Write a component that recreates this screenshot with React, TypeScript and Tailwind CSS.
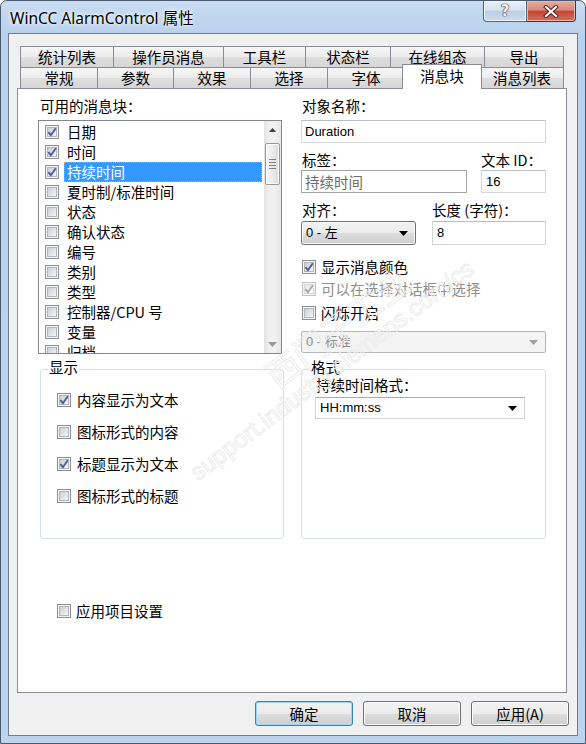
import React from "react";

function CheckBox({ checked = false, disabled = false }: { checked?: boolean; disabled?: boolean }) {
  const id = disabled ? "cbgd" : "cbgn";
  return (
    <svg width="14" height="14" viewBox="0 0 14 14" className="block shrink-0">
      <defs>
        <linearGradient id={id} x1="0" y1="0" x2="1" y2="1">
          <stop offset="0" stopColor={disabled ? "#e4e4e4" : "#c7cbd1"} />
          <stop offset="1" stopColor={disabled ? "#fbfbfb" : "#f8f8f8"} />
        </linearGradient>
      </defs>
      <rect x="0.5" y="0.5" width="13" height="13" fill="#f5f5f5" stroke={disabled ? "#c2c2c2" : "#8e8f8f"} />
      <rect x="2.5" y="2.5" width="9" height="9" fill={`url(#${id})`} stroke={disabled ? "#dadada" : "#b3b7bd"} />
      {checked && (
        <path d="M3.4 7.1 L5.9 10.2 L10.8 3.2" fill="none" stroke={disabled ? "#a9a9a9" : "#4a5e9b"} strokeWidth="1.9" />
      )}
    </svg>
  );
}

function DownArrow({ color = "#000" }: { color?: string }) {
  return (
    <svg width="9" height="5" viewBox="0 0 9 5" className="block">
      <path d="M0 0H9L4.5 5Z" fill={color} />
    </svg>
  );
}

function UpArrow({ color = "#000" }: { color?: string }) {
  return (
    <svg width="7" height="4" viewBox="0 0 7 4" className="block">
      <path d="M0 4H7L3.5 0Z" fill={color} />
    </svg>
  );
}

const row1 = [
  { t: "统计列表", w: "w-[93px]" },
  { t: "操作员消息", w: "w-[110px]" },
  { t: "工具栏", w: "w-[82px]" },
  { t: "状态栏", w: "w-[85px]" },
  { t: "在线组态", w: "w-[94px]" },
  { t: "导出", w: "w-[80px]" },
];

const row2 = [
  { t: "常规", w: "w-[77px]" },
  { t: "参数", w: "w-[76px]" },
  { t: "效果", w: "w-[77px]" },
  { t: "选择", w: "w-[77px]" },
  { t: "字体", w: "w-[77px]" },
  { t: "消息块", w: "w-[76px]", sel: true },
  { t: "消息列表", w: "w-[84px]" },
];

const items: { t: string; c: boolean; sel?: boolean }[] = [
  { t: "日期", c: true },
  { t: "时间", c: true },
  { t: "持续时间", c: true, sel: true },
  { t: "夏时制/标准时间", c: false },
  { t: "状态", c: false },
  { t: "确认状态", c: false },
  { t: "编号", c: false },
  { t: "类别", c: false },
  { t: "类型", c: false },
  { t: "控制器/CPU 号", c: false },
  { t: "变量", c: false },
  { t: "归档", c: false },
];

const tabBg = "bg-[linear-gradient(180deg,#f6f6f6_0%,#ececec_50%,#dedede_51%,#d6d6d6_100%)]";
const btnBg = "bg-[linear-gradient(180deg,#f2f2f2_0%,#ebebeb_50%,#dddddd_51%,#cfcfcf_100%)]";

function Tab({ t, w, sel, last }: { t: string; w: string; sel?: boolean; last?: boolean }) {
  if (sel) {
    return (
      <div className={`${w} h-[21px] relative`}>
        <div className="absolute -left-[2px] -right-[2px] -top-[3px] h-[25px] z-10 bg-white border-t border-l border-r border-[#898c95] flex items-center justify-center pb-[3px] leading-[18px]">
          {t}
        </div>
      </div>
    );
  }
  return (
    <div
      className={`${w} h-[21px] border-t border-l ${last ? "border-r" : ""} border-[#898c95] ${tabBg} flex items-center justify-center leading-[20px]`}
    >
      {t}
    </div>
  );
}

function Scrollbar() {
  return (
    <div className="w-[17px] h-full flex flex-col bg-[linear-gradient(90deg,#e2e2e2_0%,#efefef_25%,#f2f2f2_60%,#e6e6e6_100%)]">
      <div className="h-[17px] flex items-center justify-center">
        <UpArrow color="#3c3c3c" />
      </div>
      <div className="flex-1 pt-[5px]">
        <div className="mx-[1px] h-[42px] rounded-[2px] border border-[#9a9a9a] bg-[linear-gradient(90deg,#f6f6f6_0%,#ececec_50%,#dadada_100%)] shadow-[inset_0_0_0_1px_#fbfbfb] flex flex-col items-center justify-center gap-[2px]">
          <div className="w-[7px] h-[1px] bg-[#7d7d7d]" />
          <div className="w-[7px] h-[1px] bg-[#7d7d7d]" />
          <div className="w-[7px] h-[1px] bg-[#7d7d7d]" />
          <div className="w-[7px] h-[1px] bg-[#7d7d7d]" />
        </div>
      </div>
      <div className="h-[17px] flex items-center justify-center">
        <DownArrow color="#9a9a9a" />
      </div>
    </div>
  );
}

function Group({ title, className, titleLeft, children }: { title: string; className: string; titleLeft: string; children: React.ReactNode }) {
  return (
    <div className={`relative border border-[#d5dfe5] rounded-[3px] ${className}`}>
      <span className={`absolute -top-[11px] ${titleLeft} bg-white leading-[16px] px-[1px]`}>{title}</span>
      {children}
    </div>
  );
}

function Button({ children, focused }: { children: React.ReactNode; focused?: boolean }) {
  return (
    <div
      className={`w-[98px] h-[25px] rounded-[3px] border ${focused ? "border-[#3c7fb1] shadow-[inset_0_0_0_1px_#9cd6f6]" : "border-[#707070] shadow-[inset_0_0_0_1px_#fbfbfb]"} ${btnBg} flex items-center justify-center leading-[20px]`}
    >
      {children}
    </div>
  );
}

const latin = "[font-family:'Liberation_Sans','Noto_Sans_CJK_SC',sans-serif] text-[13px]";
const mark = "text-transparent [-webkit-text-stroke:1px_#ededed] whitespace-nowrap";

export default function App() {
  return (
    <div className="w-[586px] h-[744px] bg-white overflow-hidden">
      <div className="relative w-[586px] h-[744px] rounded-t-[7px] border border-[#4a5a70] bg-[linear-gradient(180deg,#c8dcf2_0px,#b9d1ec_32px,#bcd4ee_100%)] flex flex-col [font-family:'Noto_Sans_CJK_SC',sans-serif] text-[14.5px] text-black">
        {/* title bar */}
        <div className="h-[32px] flex justify-between items-start">
          <div className="pl-[9px] pt-[7px] text-[15.5px] leading-[20px] [font-family:'Noto_Sans','Noto_Sans_CJK_SC',sans-serif] [text-shadow:0_0_6px_#ffffff,0_0_3px_#ffffff]">
            WinCC AlarmControl 属性
          </div>
          <div className="flex mr-[9px]">
            <div className="w-[44px] h-[21px] rounded-bl-[4px] border border-t-0 border-[#4f6580] bg-[linear-gradient(180deg,#eaf1f8_0%,#d6e2f0_45%,#bccfe5_52%,#cddcee_100%)] shadow-[inset_0_0_0_1px_#f2f6fb] flex items-center justify-center">
              <span className="[font-family:'DejaVu_Sans',sans-serif] font-bold text-[15px] leading-[15px] text-[#eef2f6] [text-shadow:0_0_1px_#333,0_0_1px_#333,0_0_1px_#333]">
                ?
              </span>
            </div>
            <div className="w-[49px] h-[21px] rounded-br-[4px] border border-l-0 border-t-0 border-[#5a2a24] bg-[linear-gradient(180deg,#e7aa9e_0%,#d8887a_45%,#c6452f_52%,#d27060_100%)] shadow-[inset_0_0_0_1px_#eab7ad] flex items-center justify-center">
              <svg width="16" height="13" viewBox="0 0 16 13" className="block">
                <path d="M3 2L13 11M13 2L3 11" stroke="#4a1d17" strokeWidth="4" strokeLinecap="square" />
                <path d="M3 2L13 11M13 2L3 11" stroke="#ffffff" strokeWidth="2.2" strokeLinecap="square" />
              </svg>
            </div>
          </div>
        </div>

        {/* client area */}
        <div className="mx-[7px] h-[703px] border border-[#6f7d8f] bg-[#f0f0f0] flex flex-col">
          <div className="ml-[8px] mt-[12px] w-[550px] flex flex-col">
            <div className="ml-[3px] flex">
              {row1.map((r, i) => (
                <Tab key={r.t} t={r.t} w={r.w} last={i === row1.length - 1} />
              ))}
            </div>
            <div className="ml-[3px] flex">
              {row2.map((r, i) => (
                <Tab key={r.t} t={r.t} w={r.w} sel={r.sel} last={i === row2.length - 1} />
              ))}
            </div>
            {/* panel */}
            <div className="w-[550px] h-[605px] border border-[#898c95] bg-white flex gap-[18px] pl-[20px]">
              {/* left column */}
              <div className="w-[245px] flex flex-col">
                <div className="mt-[7px] h-[20px] leading-[20px] pl-[2px]">可用的消息块：</div>
                <div className="mt-[4px] w-[244px] h-[234px] border border-[#828790] bg-white flex">
                  <div className="flex-1 pt-[1px] overflow-hidden">
                    {items.map((it) => (
                      <div key={it.t} className="h-[20px] flex items-center pl-[6px]">
                        <CheckBox checked={it.c} />
                        <span
                          className={`ml-[5px] mr-[2px] flex-1 h-[20px] pl-[2px] leading-[18px] border ${
                            it.sel ? "bg-[#3399ff] text-white border-dotted border-[#e8a040]" : "border-transparent"
                          }`}
                        >
                          {it.t}
                        </span>
                      </div>
                    ))}
                  </div>
                  <Scrollbar />
                </div>
                <Group title="显示" titleLeft="left-[7px]" className="mt-[15px] ml-[2px] w-[244px] h-[170px] flex flex-col pl-[16px] pt-[20px] gap-[12px]">
                  <div className="h-[20px] flex items-center">
                    <CheckBox checked />
                    <span className="ml-[6px] leading-[20px]">内容显示为文本</span>
                  </div>
                  <div className="h-[20px] flex items-center">
                    <CheckBox />
                    <span className="ml-[6px] leading-[20px]">图标形式的内容</span>
                  </div>
                  <div className="h-[20px] flex items-center">
                    <CheckBox checked />
                    <span className="ml-[6px] leading-[20px]">标题显示为文本</span>
                  </div>
                  <div className="h-[20px] flex items-center">
                    <CheckBox />
                    <span className="ml-[6px] leading-[20px]">图标形式的标题</span>
                  </div>
                </Group>
                <div className="mt-[62px] ml-[19px] h-[20px] flex items-center">
                  <CheckBox />
                  <span className="ml-[5px] leading-[20px]">应用项目设置</span>
                </div>
              </div>

              {/* right column */}
              <div className="w-[245px] flex flex-col">
                <div className="mt-[7px] h-[20px] leading-[20px] pl-[1px]">对象名称：</div>
                <div className={`mt-[4px] w-[245px] h-[23px] border border-[#d3d7dd] border-t-[#b9bdc4] bg-white flex items-center pl-[3px] ${latin}`}>
                  Duration
                </div>
                <div className="mt-[7px] h-[20px] flex leading-[20px]">
                  <span className="w-[180px] pl-[1px]">标签：</span>
                  <span>文本 ID：</span>
                </div>
                <div className="h-[23px] flex gap-[14px]">
                  <div className="w-[166px] h-[23px] border border-[#a3a3a3] bg-white flex items-center pl-[3px] text-[#6d6d6d] leading-[20px]">
                    持续时间
                  </div>
                  <div className={`w-[65px] h-[23px] border border-[#d3d7dd] border-t-[#b9bdc4] bg-white flex items-center pl-[4px] ${latin}`}>
                    16
                  </div>
                </div>
                <div className="mt-[7px] h-[20px] flex leading-[20px]">
                  <span className="w-[131px] pl-[1px]">对齐：</span>
                  <span>长度 (字符)：</span>
                </div>
                <div className="mt-[1px] h-[24px] flex gap-[16px]">
                  <div className={`w-[115px] h-[24px] rounded-[3px] border border-[#707070] shadow-[inset_0_0_0_1px_#fbfbfb] ${btnBg} flex items-center justify-between pl-[4px] pr-[7px] ${latin}`}>
                    <span>0 - 左</span>
                    <DownArrow />
                  </div>
                  <div className={`w-[114px] h-[24px] border border-[#d3d7dd] border-t-[#b9bdc4] bg-white flex items-center pl-[4px] ${latin}`}>
                    8
                  </div>
                </div>
                <div className="mt-[12px] h-[20px] flex items-center pl-[1px]">
                  <CheckBox checked />
                  <span className="ml-[5px] leading-[20px]">显示消息颜色</span>
                </div>
                <div className="mt-[2px] h-[20px] flex items-center pl-[1px]">
                  <CheckBox checked disabled />
                  <span className="ml-[5px] leading-[20px] text-[#8d8d8d]">可以在选择对话框中选择</span>
                </div>
                <div className="mt-[4px] h-[20px] flex items-center pl-[1px]">
                  <CheckBox />
                  <span className="ml-[5px] leading-[20px]">闪烁开启</span>
                </div>
                <div className={`mt-[8px] w-[245px] h-[22px] rounded-[2px] border border-[#b3b7bb] bg-[#f4f4f4] flex items-center justify-between pl-[4px] pr-[7px] text-[#8d8d8d] ${latin}`}>
                  <span>0 - 标准</span>
                  <DownArrow color="#a0a0a0" />
                </div>
                <Group title="格式" titleLeft="left-[8px]" className="mt-[16px] w-[245px] h-[170px] flex flex-col pt-[5px]">
                  <div className="h-[20px] leading-[20px] pl-[14px]">持续时间格式：</div>
                  <div className={`mt-[2px] ml-[13px] w-[210px] h-[22px] border border-[#d3d7dd] border-t-[#abadb3] bg-white flex items-center justify-between pl-[4px] pr-[7px] ${latin}`}>
                    <span>HH:mm:ss</span>
                    <DownArrow />
                  </div>
                </Group>
              </div>
            </div>
          </div>

          {/* bottom buttons */}
          <div className="mt-[8px] mr-[8px] flex justify-end gap-[10px]">
            <Button focused>确定</Button>
            <Button>取消</Button>
            <Button>应用(A)</Button>
          </div>
        </div>

        {/* faint watermark overlay */}
        <div className="absolute left-[150px] top-[325px] w-[340px] rotate-[-37deg] origin-center pointer-events-none flex flex-col items-center leading-none">
          <span className={`ml-[60px] text-[34px] ${mark}`}>西门子工业</span>
          <span className={`mt-[2px] text-[24px] [font-family:'Liberation_Sans',sans-serif] ${mark}`}>support.industry.siemens.com/cs</span>
        </div>
      </div>
    </div>
  );
}
